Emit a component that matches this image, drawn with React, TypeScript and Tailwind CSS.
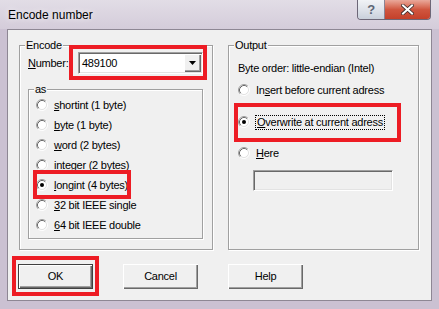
import React from "react"
import clsx from "clsx"

function Radio({ checked }: { checked?: boolean }) {
  return (
    <svg width="12" height="12" viewBox="0 0 12 12" className="shrink-0">
      <circle cx="6" cy="6" r="4.5" fill="#fff" />
      <path d="M2.11 9.89A5.5 5.5 0 0 1 9.89 2.11" stroke="#a0a0a0" fill="none" />
      <path d="M9.89 2.11A5.5 5.5 0 0 1 2.11 9.89" stroke="#fff" fill="none" />
      <path d="M2.82 9.18A4.5 4.5 0 0 1 9.18 2.82" stroke="#696969" fill="none" />
      <path d="M9.18 2.82A4.5 4.5 0 0 1 2.82 9.18" stroke="#e3e3e3" fill="none" />
      {checked && <circle cx="6" cy="6" r="2" fill="#000" />}
    </svg>
  )
}

function Group({ label, className, children }: { label: string; className?: string; children?: React.ReactNode }) {
  return (
    <div className={clsx("relative border border-[#a0a0a0] shadow-[inset_1px_1px_0_#fff,1px_1px_0_#fff]", className)}>
      <span className="absolute -top-[8px] left-[5px] bg-[#f0f0f0] px-[1px] leading-[14px]">{label}</span>
      {children}
    </div>
  )
}

function Option({ checked, children, focus }: { checked?: boolean; children: React.ReactNode; focus?: boolean }) {
  return (
    <div className="flex h-[20px] items-center gap-[6px]">
      <Radio checked={checked} />
      <span className={clsx("leading-[13px]", focus && "-ml-[1px] border border-dotted border-black px-[1px]")}>{children}</span>
    </div>
  )
}

function Btn({ children, def }: { children: React.ReactNode; def?: boolean }) {
  return (
    <div
      className={clsx(
        "flex h-[25px] w-[75px] items-center justify-center bg-[#f0f0f0] shadow-[inset_1px_1px_0_#fff,inset_-1px_-1px_0_#696969,inset_-2px_-2px_0_#a0a0a0]",
        def && "border border-[#404040]"
      )}
    >
      {children}
    </div>
  )
}

const items = [
  ["s", "hortint (1 byte)"],
  ["b", "yte (1 byte)"],
  ["w", "ord (2 bytes)"],
  ["i", "nteger (2 bytes)"],
  ["l", "ongint (4 bytes)"],
  ["3", "2 bit IEEE single"],
  ["6", "4 bit IEEE double"],
]

export default function App() {
  return (
    <div
      className="relative flex h-[309px] w-[439px] flex-col overflow-hidden bg-[#cbc1d2] text-[11px] tracking-[-0.25px] text-black"
      style={{ fontFamily: '"Liberation Sans", Arial, sans-serif' }}
    >
      {/* title bar */}
      <div className="flex h-[29px] shrink-0 items-start justify-between bg-gradient-to-b from-[#e2dde6] to-[#d4ccda] pl-[8px] pr-[8px]">
        <span className="mt-[8px] text-[12px] leading-[14px] tracking-normal [text-shadow:0_0_6px_#fff]">Encode number</span>
        <div className="flex h-[20px] overflow-hidden rounded-b-[4px] border border-t-0 border-[#6d6777]">
          <div className="flex w-[27px] items-center justify-center border-r border-[#8a8494] bg-gradient-to-b from-[#f1f3f6] via-[#dfe3ea] to-[#c9d0db] text-[13px] font-bold text-[#5c6675]">?</div>
          <div className="flex w-[45px] items-center justify-center bg-gradient-to-b from-[#e9a89a] via-[#d0563f] to-[#c4402a]">
            <svg width="13" height="11" viewBox="0 0 13 11">
              <path d="M2 1.5L11 9.5M11 1.5L2 9.5" stroke="#3a2a2a" strokeWidth="3.6" strokeLinecap="square" />
              <path d="M2 1.5L11 9.5M11 1.5L2 9.5" stroke="#fff" strokeWidth="2" strokeLinecap="square" />
            </svg>
          </div>
        </div>
      </div>

      {/* client area */}
      <div className="mx-[7px] mb-[8px] flex flex-1 flex-col border border-[#8e8794] bg-[#f0f0f0]">
        <div className="flex gap-[15px] pl-[11px] pt-[15px]">
          <Group label="Encode" className="flex h-[205px] w-[194px] flex-col pl-[8px]">
            <div className="mt-[6px] flex items-center">
              <span className="w-[50px] leading-[13px]">
                <u>N</u>umber:
              </span>
              <div className="flex h-[22px] w-[125px] items-center border border-b-white border-l-[#a0a0a0] border-r-white border-t-[#a0a0a0] bg-white shadow-[inset_1px_1px_0_#696969,inset_-1px_-1px_0_#e3e3e3]">
                <span className="flex-1 pl-[3px] leading-[13px]">489100</span>
                <div className="mr-[1px] flex h-[18px] w-[17px] items-center justify-center bg-[#f0f0f0] shadow-[inset_1px_1px_0_#fff,inset_-1px_-1px_0_#696969,inset_-2px_-2px_0_#a0a0a0]">
                  <svg width="7" height="4" viewBox="0 0 7 4">
                    <path d="M0 0H7L3.5 4Z" fill="#000" />
                  </svg>
                </div>
              </div>
            </div>
            <Group label="as" className="mt-[15px] h-[150px] w-[175px] pl-[7px] pt-[5px]">
              {items.map(([u, rest]) => (
                <Option key={u} checked={u === "l"}>
                  <u>{u}</u>
                  {rest}
                </Option>
              ))}
            </Group>
          </Group>

          <Group label="Output" className="h-[205px] w-[191px] pl-[9px] pt-[15px]">
            <div className="leading-[14px]">Byte order: little-endian (Intel)</div>
            <div className="mt-[5px]">
              <Option>
                In<u>s</u>ert before current adress
              </Option>
            </div>
            <div className="mt-[12px]">
              <Option checked focus>
                <u>O</u>verwrite at current adress
              </Option>
            </div>
            <div className="mt-[11px]">
              <Option>
                <u>H</u>ere
              </Option>
            </div>
            <div className="ml-[15px] mt-[7px] h-[21px] w-[140px] border border-b-white border-l-[#a0a0a0] border-r-white border-t-[#a0a0a0] bg-[#f0f0f0] shadow-[inset_1px_1px_0_#696969,inset_-1px_-1px_0_#e3e3e3]" />
          </Group>
        </div>

        <div className="mt-[14px] flex gap-[30px] pl-[10px]">
          <Btn def>OK</Btn>
          <Btn>Cancel</Btn>
          <Btn>Help</Btn>
        </div>
      </div>

      {/* red annotation boxes */}
      <div className="absolute left-[69px] top-[45px] h-[35px] w-[138px] border-4 border-[#ed1c24]" />
      <div className="absolute left-[33px] top-[170px] h-[29px] w-[98px] border-4 border-[#ed1c24]" />
      <div className="absolute left-[234px] top-[103px] h-[39px] w-[167px] border-4 border-[#ed1c24]" />
      <div className="absolute left-[12px] top-[256px] h-[40px] w-[87px] border-4 border-[#ed1c24]" />
    </div>
  )
}
